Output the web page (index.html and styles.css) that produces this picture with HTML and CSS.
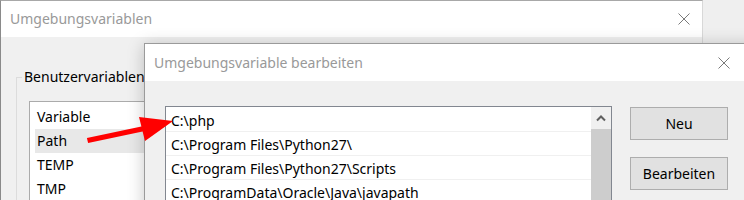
FILE: index.html
```html
<!DOCTYPE html>
<html lang="de">
<head>
<meta charset="utf-8">
<title>Umgebungsvariablen</title>
<link rel="stylesheet" href="styles.css">
</head>
<body>
<div class="desk">
  <div class="win win1">
    <div class="titlebar t1">
      <span class="title">Umgebungsvariablen</span>
      <svg class="close" width="12" height="12" viewBox="0 0 12 12"><path d="M0.5 0.5L11.5 11.5M11.5 0.5L0.5 11.5"/></svg>
    </div>
    <div class="w1body">
      <fieldset class="group">
        <legend>Benutzervariablen</legend>
        <div class="listview">
          <div class="lvrow">Variable</div>
          <div class="lvrow sel">Path</div>
          <div class="lvrow">TEMP</div>
          <div class="lvrow">TMP</div>
        </div>
      </fieldset>
    </div>
  </div>

  <div class="win win2">
    <div class="titlebar t2">
      <span class="title">Umgebungsvariable bearbeiten</span>
      <svg class="close" width="12" height="12" viewBox="0 0 12 12"><path d="M0.5 0.5L11.5 11.5M11.5 0.5L0.5 11.5"/></svg>
    </div>
    <div class="w2body">
      <div class="listbox">
        <div class="rows">
          <div class="row">C:\php</div>
          <div class="row">C:\Program Files\Python27\</div>
          <div class="row">C:\Program Files\Python27\Scripts</div>
          <div class="row">C:\ProgramData\Oracle\Java\javapath</div>
        </div>
        <div class="scrollbar">
          <div class="sb-arrow"><svg width="10" height="7" viewBox="0 0 10 7"><path d="M1 5.5L5 1.5L9 5.5"/></svg></div>
          <div class="sb-thumb"></div>
        </div>
      </div>
      <div class="buttons">
        <button class="btn">Neu</button>
        <button class="btn">Bearbeiten</button>
      </div>
    </div>
  </div>

  <svg class="pointer" width="744" height="200" viewBox="0 0 744 200">
    <polygon points="86.9,138.1 141.4,126.6 139,117 173,121 145,141 142.6,131.4 88.1,142.9"/>
  </svg>
</div>
</body>
</html>
```

FILE: styles.css
```css
* { box-sizing: border-box; }

html, body {
  margin: 0;
  padding: 0;
  background: #efefef;
}

body {
  font-family: "Noto Sans", "Open Sans", sans-serif;
  font-size: 14px;
  color: #000;
}

.desk {
  position: relative;
  width: 744px;
  height: 200px;
  overflow: hidden;
  background: #efefef;
}

.win {
  position: absolute;
  background: #f0f0f0;
}

.win1 {
  left: 0;
  top: 0;
  width: 703px;
  height: 260px;
  border-top: 1px solid #a8a8a8;
  border-left: 1px solid #8a8a8a;
  border-right: 1px solid #d8d8d8;
}

.win2 {
  left: 144px;
  top: 43px;
  width: 622px;
  height: 220px;
  border: 1px solid #9a9a9a;
  box-shadow: 0 2px 16px rgba(0, 0, 0, 0.22);
}

.titlebar {
  display: flex;
  align-items: center;
  justify-content: space-between;
  background: #fff;
}

.t1 {
  height: 36px;
  padding: 0 12px 0 9px;
}

.t2 {
  height: 37px;
  padding: 0 35px 0 9px;
}

.title {
  color: #999;
  white-space: nowrap;
  line-height: 20px;
}

.close path {
  stroke: #7a7a7a;
  stroke-width: 1;
  fill: none;
}

.w1body {
  padding: 30px 0 0 15px;
}

.group {
  margin: 0;
  padding: 0 0 0 5px;
  border: 1px solid #dcdcdc;
  width: 520px;
  height: 200px;
}

.group legend {
  padding: 0 2px;
  line-height: 20px;
  font-size: 14px;
}

.listview {
  margin: 14px 0 0 7px;
  width: 420px;
  height: 140px;
  background: #fff;
  border: 1px solid #ababab;
  padding: 3px 0 0 5px;
}

.lvrow {
  height: 24px;
  line-height: 24px;
  padding-left: 2px;
  white-space: nowrap;
}

.lvrow.sel {
  background: #e8e8e8;
}

.w2body {
  display: flex;
  align-items: flex-start;
  padding: 25px 0 0 20px;
}

.listbox {
  display: flex;
  width: 447px;
  height: 200px;
  background: #fff;
  border: 1px solid #828790;
}

.rows {
  width: 425px;
  padding-top: 1px;
}

.row {
  height: 24px;
  line-height: 25px;
  padding-left: 5px;
  border-bottom: 1px solid #f0f0f0;
  white-space: nowrap;
  overflow: hidden;
}

.scrollbar {
  width: 20px;
  display: flex;
  flex-direction: column;
  background: #f0f0f0;
}

.sb-arrow {
  height: 22px;
  display: flex;
  align-items: center;
  justify-content: center;
}

.sb-arrow path {
  stroke: #606060;
  stroke-width: 2;
  fill: none;
}

.sb-thumb {
  flex: 1;
  background: #cdcdcd;
}

.buttons {
  display: flex;
  flex-direction: column;
  gap: 17px;
  margin: 1px 0 0 18px;
}

.btn {
  width: 98px;
  height: 33px;
  padding: 0;
  background: #e1e1e1;
  border: 1px solid #adadad;
  border-radius: 0;
  font-family: "Noto Sans", "Open Sans", sans-serif;
  font-size: 14px;
  color: #000;
}

.pointer {
  position: absolute;
  left: 0;
  top: 0;
  pointer-events: none;
}

.pointer polygon {
  fill: #ff0000;
}
```
